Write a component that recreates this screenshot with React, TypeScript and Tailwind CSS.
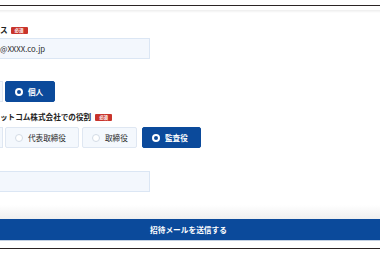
import React from 'react';

const jp = { fontFamily: '"Noto Sans CJK JP", "Noto Sans", sans-serif' };

function Badge() {
  return (
    <span className="inline-flex items-center justify-center w-[17px] h-[7px] bg-[#c9342c] text-white text-[4.5px] font-bold leading-none rounded-[1px]">
      必須
    </span>
  );
}

function Radio({ label, checked, width }: { label: string; checked?: boolean; width: string }) {
  return (
    <div
      className={`${width} h-[21px] shrink-0 flex items-center pl-[9px] rounded-[2px] border ${
        checked ? 'bg-[#0b4a9b] border-[#0b4a9b]' : 'bg-[#f4f8fd] border-[#dfe7f2]'
      }`}
    >
      {checked ? (
        <span className="w-[8px] h-[8px] rounded-full border-[2px] border-white bg-[#0b4a9b] shrink-0" />
      ) : (
        <span className="w-[8px] h-[8px] rounded-full border border-[#d3dbe6] bg-white shrink-0" />
      )}
      <span
        className={`ml-[5px] text-[7.6px] leading-none ${checked ? 'text-white font-bold' : 'text-[#2a2a2a]'}`}
      >
        {label}
      </span>
    </div>
  );
}

export default function App() {
  return (
    <div className="w-[380px] h-[254px] bg-white overflow-hidden flex flex-col" style={jp}>
      <div className="h-[5px]" />
      <div className="h-px bg-[#2b2424]" />
      <div className="h-[4px]" />
      <div className="h-[3px] bg-gradient-to-b from-[#ededed] to-white" />

      {/* mail address */}
      <div className="mt-[12px] h-[10px] flex items-center gap-[3px]">
        <span className="text-[7.6px] font-bold text-[#222] leading-none">ス</span>
        <Badge />
      </div>
      <div className="mt-[3px] w-[150px] h-[21px] bg-[#f3f7fd] border border-[#dbe6f4] border-l-0 flex items-center">
        <span className="text-[7.8px] text-[#2a2a2a] leading-none">@XXXX.co.jp</span>
      </div>

      {/* type */}
      <div className="mt-[22px] flex">
        <div className="w-[3px] h-[21px] bg-[#f4f8fd] border border-l-0 border-[#dfe7f2]" />
        <div className="ml-[2px]">
          <Radio label="個人" checked width="w-[50px]" />
        </div>
      </div>

      {/* role */}
      <div className="mt-[10px] h-[10px] flex items-center gap-[4px]">
        <span className="text-[7.6px] font-bold text-[#222] leading-none">ットコム株式会社での役割</span>
        <Badge />
      </div>
      <div className="mt-[5px] flex">
        <div className="w-[3px] h-[21px] bg-[#f4f8fd] border border-l-0 border-[#dfe7f2]" />
        <div className="ml-[2px] flex gap-[3px]">
          <Radio label="代表取締役" width="w-[74px]" />
          <Radio label="取締役" width="w-[55px]" />
        </div>
        <div className="ml-[5px]">
          <Radio label="監査役" checked width="w-[59px]" />
        </div>
      </div>

      {/* note */}
      <div className="mt-[23px] w-[150px] h-[21px] bg-[#f3f7fd] border border-[#dbe6f4] border-l-0" />

      <div className="mt-[13px] h-[14px] bg-gradient-to-b from-white to-[#efefef]" />
      <button className="h-[21px] w-full bg-[#0b4a9b] flex items-center justify-center">
        <span className="text-[7.7px] font-bold text-white leading-none -ml-[3px]">招待メールを送信する</span>
      </button>
      <div className="h-px bg-[#c3d0e2]" />
      <div className="h-[7px]" />
      <div className="h-px bg-[#2b2424]" />
    </div>
  );
}
